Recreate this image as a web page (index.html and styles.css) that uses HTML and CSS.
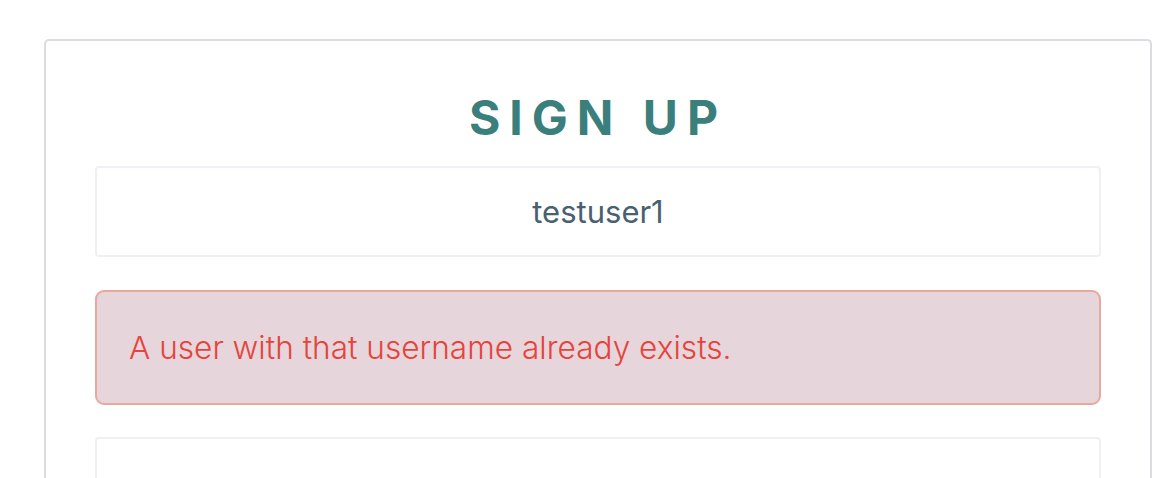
FILE: index.html
```html
<!DOCTYPE html>
<html>
<head>
<meta charset="utf-8">
<link rel="stylesheet" href="styles.css">
</head>
<body>
<div class="page">
  <div class="card">
    <h1 class="title">SIGN UP</h1>
    <div class="field">testuser1</div>
    <div class="alert">A user with that username already exists.</div>
    <div class="field field-empty"></div>
  </div>
</div>
</body>
</html>
```
FILE: styles.css
```css
html, body {
  margin: 0;
  padding: 0;
  background: #ffffff;
  overflow: hidden;
}
body {
  font-family: Inter, "Noto Sans", sans-serif;
}
.page {
  padding: 39px 18px 0 44px;
  height: 478px;
  box-sizing: border-box;
  overflow: hidden;
}
.card {
  border: 2px solid #dcdbe0;
  border-bottom: none;
  border-radius: 5px 5px 0 0;
  padding: 48px 49px 0 49px;
  height: 500px;
  box-sizing: border-box;
}
.title {
  margin: 0;
  text-align: center;
  font-size: 48px;
  font-weight: 700;
  letter-spacing: 9px;
  color: #3a7f7b;
  line-height: 58px;
}
.field {
  margin-top: 19px;
  height: 91px;
  box-sizing: border-box;
  border: 2px solid #efeff5;
  border-radius: 4px;
  display: flex;
  align-items: center;
  justify-content: center;
  font-size: 31px;
  color: #4a5f70;
}
.alert {
  margin-top: 33px;
  height: 115px;
  box-sizing: border-box;
  border: 2px solid #e9a89d;
  border-radius: 9px;
  background: #e6d5db;
  color: #e5443c;
  font-size: 31.6px;
  font-weight: 300;
  display: flex;
  align-items: center;
  padding-left: 32px;
}
.field-empty {
  margin-top: 32px;
}
```
